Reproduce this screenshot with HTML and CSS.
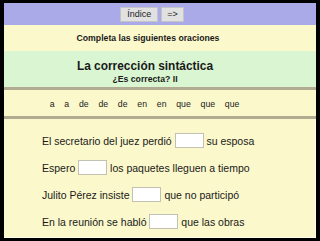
FILE: index.html
```html
<!DOCTYPE html>
<html lang="es">
<head>
<meta charset="utf-8">
<link rel="stylesheet" href="styles.css">
</head>
<body>
<div class="frame">
  <div class="nav">
    <button class="btn">Índice</button>
    <button class="btn btn-next">=&gt;</button>
  </div>
  <div class="intro">Completa las siguientes oraciones</div>
  <div class="head">
    <div class="title">La corrección sintáctica</div>
    <div class="subtitle">¿Es correcta? II</div>
  </div>
  <div class="words">
    <span>a</span><span>a</span><span>de</span><span>de</span><span>de</span><span>en</span><span>en</span><span>que</span><span>que</span><span>que</span>
  </div>
  <div class="sentences">
    <div class="line">El secretario del juez perdió <input class="gap" type="text"> su esposa</div>
    <div class="line">Espero <input class="gap" type="text"> los paquetes lleguen a tiempo</div>
    <div class="line">Julito Pérez insiste <input class="gap" type="text"> que no participó</div>
    <div class="line">En la reunión se habló <input class="gap" type="text"> que las obras</div>
  </div>
</div>
</body>
</html>
```
FILE: styles.css
```css
html, body {
  margin: 0;
  padding: 0;
  background: #000;
}
body {
  padding: 3px 4px 3px 4px;
  font-family: "Liberation Sans", Arial, sans-serif;
  color: #1a1a1a;
}
.frame {
  height: 235px;
  display: flex;
  flex-direction: column;
  background: #fbf8cb;
}
.nav {
  height: 22px;
  background: #aaaae8;
  display: flex;
  justify-content: center;
  align-items: center;
  gap: 3px;
  padding-right: 16px;
}
.btn {
  height: 15px;
  padding: 0 6px;
  margin: 0;
  background: #e1e1e1;
  border: 1px solid #c4c4c8;
  font-family: "Liberation Sans", Arial, sans-serif;
  font-size: 9px;
  color: #222;
  line-height: 13px;
}
.btn-next {
  padding: 0 5px;
}
.intro {
  height: 26px;
  display: flex;
  align-items: center;
  justify-content: center;
  padding-right: 24px;
  font-weight: bold;
  font-size: 8.7px;
}
.head {
  background: #d9f5d2;
  display: flex;
  flex-direction: column;
  align-items: center;
  padding-right: 30px;
  padding-top: 8px;
  box-sizing: border-box;
  border-bottom: 3px solid #b3ab91;
  height: 39px;
}
.title {
  font-weight: bold;
  font-size: 11.9px;
  line-height: 15px;
}
.subtitle {
  font-weight: bold;
  font-size: 8.7px;
  line-height: 10px;
}
.words {
  height: 29px;
  box-sizing: border-box;
  border-bottom: 3px solid #b3ab91;
  display: flex;
  justify-content: center;
  align-items: center;
  gap: 9.8px;
  padding-right: 31px;
  padding-top: 2px;
  font-size: 8.7px;
  color: #222;
}
.sentences {
  flex: 1;
  padding: 8px 0 0 38px;
  font-size: 10.5px;
  border-right: 1px solid #fefde8;
  border-bottom: 1px solid #fefde8;
}
.line {
  height: 27px;
  display: flex;
  align-items: center;
  white-space: pre;
}
.gap {
  width: 29px;
  height: 15px;
  box-sizing: border-box;
  margin: 0;
  padding: 0;
  border: 1px solid #c3c0b4;
  background: #fff;
}
```
